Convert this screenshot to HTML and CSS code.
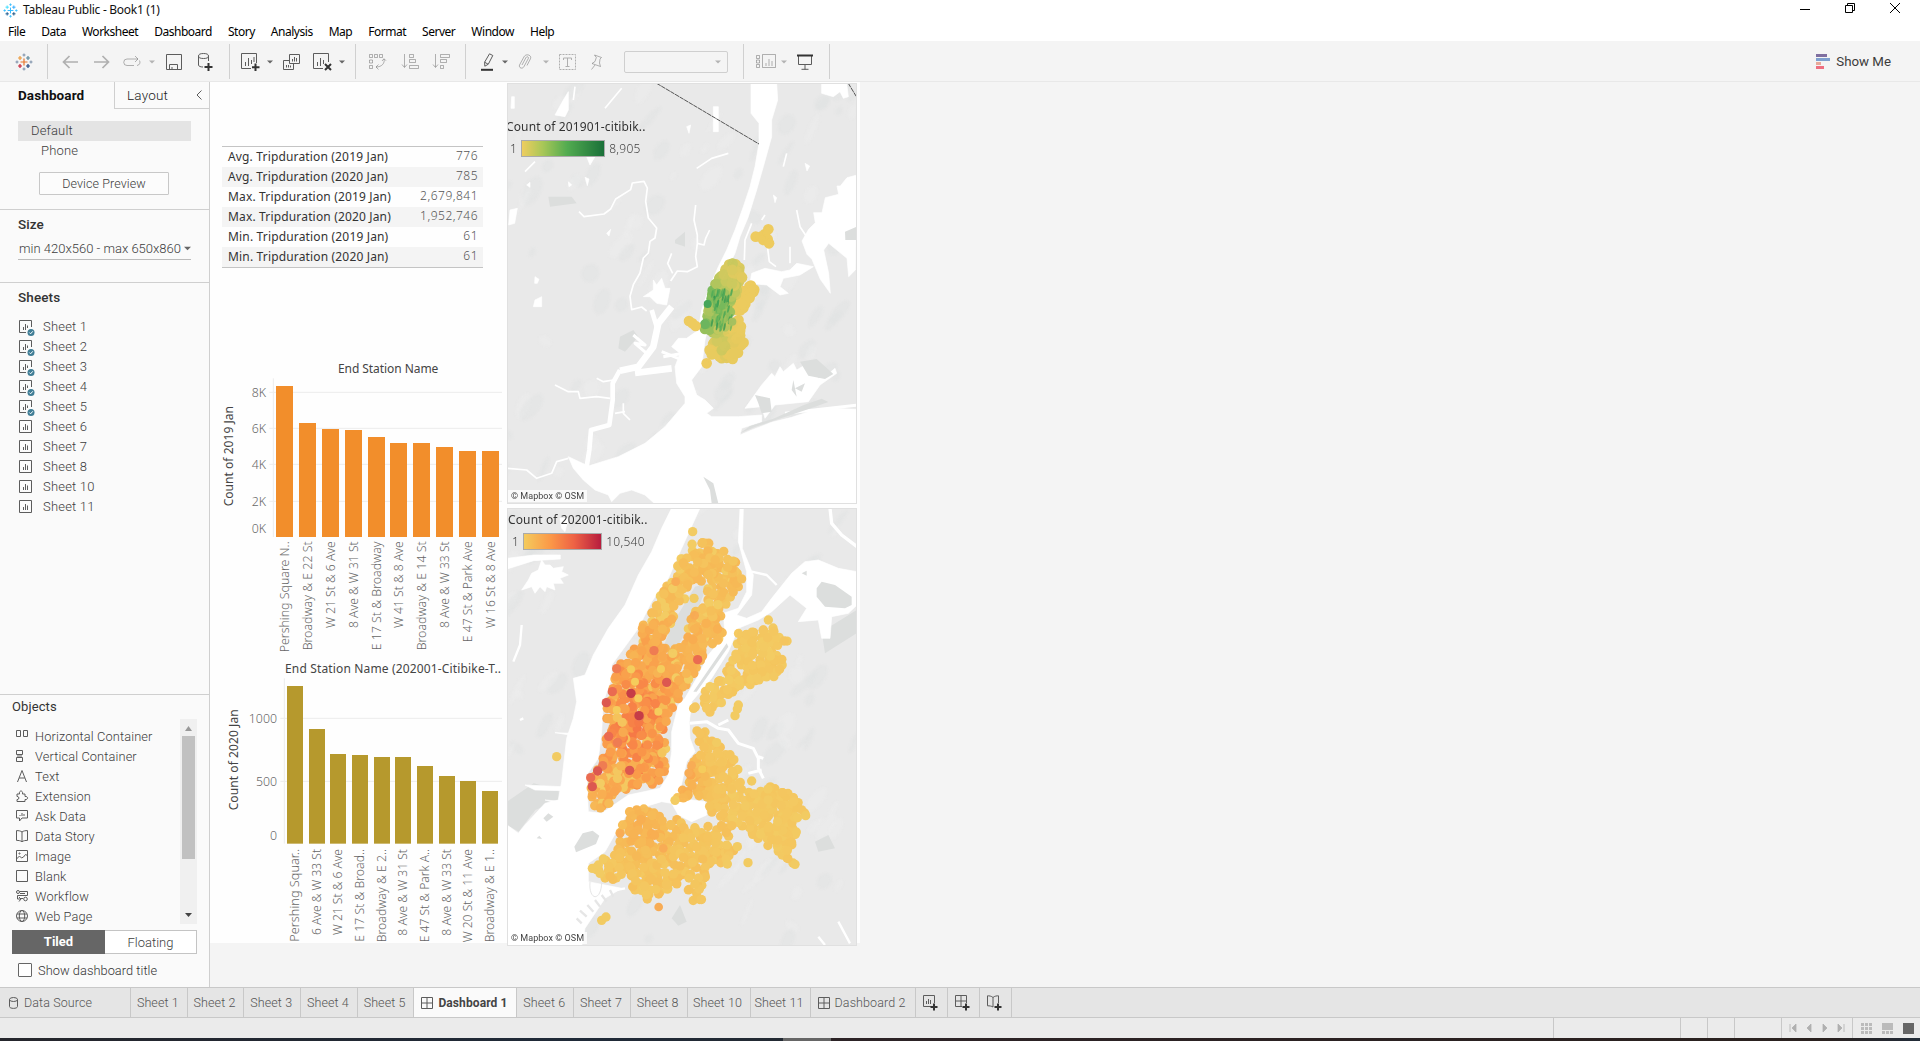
FILE: index.html
```html
<!DOCTYPE html>
<html lang="en">
<head>
<meta charset="utf-8">
<title>Tableau Public - Book1 (1)</title>
<link rel="stylesheet" href="styles.css">
</head>
<body>
<svg class="defs" width="0" height="0" aria-hidden="true">
  <symbol id="logo" viewBox="0 0 18 18">
    <path class="l-or" d="M9 5.5v7M5.5 9h7"/>
    <path class="l-a" d="M5 3v4M3 5h4"/><path class="l-b" d="M13 3v4M11 5h4"/>
    <path class="l-c" d="M5 11v4M3 13h4"/><path class="l-d" d="M13 11v4M11 13h4"/>
    <path class="l-e" d="M9 .5v3M7.5 2h3M9 14.500v3M7.500 16h3M2 7.500v3M.5 9h3M16 7.500v3M14.500 9h3"/>
  </symbol>
  <symbol id="sheet" viewBox="0 0 16 16"><path d="M1.500 1.500h12v12h-12zM5.500 8v3M7.500 5v6M9.500 6.500v4.500"/></symbol>
  <symbol id="sheet-used" viewBox="0 0 18 18"><path d="M13.500 8V1.500h-12v12H8M5.500 8v3M7.500 5v6M9.500 6.500V9"/><circle class="badge" cx="13" cy="13.500" r="3.500"/><path class="tick" d="M11.300 13.500l1.300 1.300 2.200-2.500"/></symbol>
  <symbol id="caret" viewBox="0 0 6 4"><path class="solid" d="M0 .5h6L3 3.500z"/></symbol>
  <symbol id="dash" viewBox="0 0 12 12"><path d="M.5.5h11v11H.5zM6 .5v11M.5 6h11"/></symbol>
</svg>

<header class="titlebar">
  <svg class="app-icon" width="15" height="15"><use href="#logo"/></svg>
  <span class="app-title">Tableau Public - Book1 (1)</span>
  <div class="win-controls">
    <svg width="12" height="12"><path d="M1 7.500h10"/></svg>
    <svg width="12" height="12"><path d="M1.500 3.500h7v7h-7zM3.500 3.500v-2h7v7h-2"/></svg>
    <svg width="12" height="12"><path d="M1 1l10 10M11 1L1 11"/></svg>
  </div>
</header>
<nav class="menu">
  <span>File</span><span>Data</span><span>Worksheet</span><span>Dashboard</span><span>Story</span><span>Analysis</span><span>Map</span><span>Format</span><span>Server</span><span>Window</span><span>Help</span>
</nav>

<div class="toolbar">
  <div class="group g-logo"><svg width="18" height="18"><use href="#logo"/></svg></div>
  <div class="group g-nav">
    <svg class="off thick" width="16" height="14"><path d="M16 7H1.500M7.500 1L1.500 7l6 6"/></svg>
    <svg class="off thick" width="16" height="14"><path d="M0 7h14.500M8.500 1l6 6-6 6"/></svg>
    <svg class="off" width="18" height="12"><path d="M11 9.500H4a3.200 3.200 0 0 1 0-6.500h11M12 0l3 3-3 3M14 9.500a3.300 3.300 0 0 0 2.500-5"/></svg>
    <svg class="off" width="6" height="4"><use href="#caret"/></svg>
    <svg width="16" height="16"><path d="M.5.5h15v15H.5zM3.500 15.500v-5h8v5M6 15.500v-2.500"/></svg>
    <svg width="16" height="18"><ellipse cx="5.500" cy="3" rx="5" ry="2.500"/><path d="M.5 3v9c0 1.300 2 2 4.500 2M10.500 3v5"/><path class="bold" d="M10.500 10v8M6.500 14h8"/></svg>
  </div>
  <div class="group g-sheets">
    <svg width="18" height="18"><path d="M10 15.500H.5V.5h15V10M4.500 9v4M7.500 5v8M10.500 7v4M13 4v5"/><path class="bold" d="M14.500 10.500v7.500M11 14.300h7.500"/></svg>
    <svg width="6" height="4"><use href="#caret"/></svg>
    <svg width="18" height="16"><path d="M6.500.5h10v9h-10zM9.500 5v2.500M11.500 3v4.500M13.500 4v3.500M6.500 6.500h-6v9h10v-6M3.500 11v2.500M5.500 11v2.500M7.500 11.500v2"/></svg>
    <svg width="18" height="18"><path d="M10 15.500H.5V.5h15V9M4.500 9v4M7.500 5v8M10.500 7v4"/><path class="bold" d="M12 11l6 6M18 11l-6 6"/></svg>
    <svg width="6" height="4"><use href="#caret"/></svg>
  </div>
  <div class="group g-sort">
    <svg class="off" width="17" height="17"><path d="M.5 1.500h3v3h-3zM5.500 1.500h3v3h-3zM10.500 1.500h3v3h-3zM.5 7h3v3h-3zM.5 12.500h3v3h-3zM15 6c1 4-2 8-8 8M9.500 11.500L7 14l2.500 2.500M13 8l2-2.300 2 2"/></svg>
    <svg class="off" width="18" height="17"><path d="M3.500 1v13M1 11.500l2.500 3 2.500-3M8.500 1.500h4v3h-4zM8.500 6.500h6v3h-6zM8.500 12.500h9v3h-9z"/></svg>
    <svg class="off" width="18" height="17"><path d="M3.500 1v13M1 11.500l2.500 3 2.500-3M8.500 1.500h9v3h-9zM8.500 6.500h6v3h-6zM8.500 12.500h3v3h-3z"/></svg>
  </div>
  <div class="group g-mark">
    <svg width="14" height="18"><path d="M8.500.8l3.300 1.700-4.500 8.700-3.500 2-.2-4zM3.600 9.200l3.500 2"/><path class="bold" d="M0 16.800h12"/></svg>
    <svg width="6" height="4"><use href="#caret"/></svg>
    <svg class="off" width="14" height="16"><path d="M4 11l4-7.500c1-1.500 3-.5 2.300 1L6 12.500c-1.500 3-5.500 1.500-4.500-1.500L6 2.800C8-.8 14 1 12.500 4.700L9 11.500"/></svg>
    <svg class="off" width="6" height="4"><use href="#caret"/></svg>
    <svg class="off" width="17" height="16"><path stroke-dasharray="2 1" d="M.5.500h16v15H.5z"/><path d="M4.500 6V4h8v2M8.500 4v9M6.500 12.500h4"/></svg>
    <svg class="off" width="14" height="16"><path d="M5.500 1l7 2.500-1.500 1.500-.5 4 1 3.500-8.500-3 3-2 1.300-4zM6 11l-3.500 4.500"/></svg>
    <span></span>
    <div class="combo"><svg class="off" width="6" height="4"><use href="#caret"/></svg></div>
  </div>
  <div class="group g-fit">
    <svg class="off" width="20" height="15"><path d="M.5 1.500h3v3h-3zM.5 6h3v3h-3zM.5 10.500h3v3h-3zM6.500.5h13v13h-13zM10 9v3M13 5v7M16 7v5"/></svg>
    <svg class="off" width="6" height="4"><use href="#caret"/></svg>
    <svg width="18" height="16"><path d="M2.500 2v8.500h13V2M9 10.500v5M5.500 15.300h7"/><path class="bold" d="M1 1.500h16"/></svg>
  </div>
  <div class="show-me"><svg width="14" height="15"><path fill="#7f6fa0" d="M0 0h11v3H0z"/><path fill="#7ea0cf" d="M0 4h14v3H0z"/><path fill="#e8a99a" d="M0 8h5v3H0z"/><path fill="#ee6f80" d="M0 12h8v3H0z"/></svg><span>Show Me</span></div>
</div>

<main class="work">
  <aside class="side">
    <div class="side-tabs"><b>Dashboard</b><div class="tab-off"><span>Layout</span><svg width="6" height="10"><path d="M5.500.5L1 5l4.500 4.500"/></svg></div></div>
    <section class="devices">
      <div class="dev on">Default</div><div class="dev sub">Phone</div>
      <div class="preview">Device Preview</div>
    </section>
    <section class="size"><h2>Size</h2><div class="select"><span>min 420x560 - max 650x860</span><svg width="7" height="5"><use href="#caret"/></svg></div></section>
    <section class="sheets"><h2>Sheets</h2>
      <ul>
        <li><svg><use href="#sheet-used" width="18" height="18"/></svg>Sheet 1</li>
        <li><svg><use href="#sheet-used" width="18" height="18"/></svg>Sheet 2</li>
        <li><svg><use href="#sheet-used" width="18" height="18"/></svg>Sheet 3</li>
        <li><svg><use href="#sheet-used" width="18" height="18"/></svg>Sheet 4</li>
        <li><svg><use href="#sheet-used" width="18" height="18"/></svg>Sheet 5</li>
        <li><svg><use href="#sheet" width="16" height="16"/></svg>Sheet 6</li>
        <li><svg><use href="#sheet" width="16" height="16"/></svg>Sheet 7</li>
        <li><svg><use href="#sheet" width="16" height="16"/></svg>Sheet 8</li>
        <li><svg><use href="#sheet" width="16" height="16"/></svg>Sheet 10</li>
        <li><svg><use href="#sheet" width="16" height="16"/></svg>Sheet 11</li>
      </ul>
    </section>
    <section class="objects"><h3>Objects</h3>
      <div class="obj-box">
        <ul>
          <li><svg viewBox="0 0 12 12"><path d="M.5.5h4v6h-4zM7.500.5h4v6h-4z"/></svg>Horizontal Container</li>
          <li><svg viewBox="0 0 12 12"><path d="M.5.500h6v4h-6zM.5 7.500h6v4h-6z"/><path class="solid" opacity=".5" d="M1 5h5v2H1z"/></svg>Vertical Container</li>
          <li><svg viewBox="0 0 12 12"><path d="M1.500 12L6 .5l4.500 11.500M3.200 8h5.600"/></svg>Text</li>
          <li><svg viewBox="0 0 12 12"><path d="M1 4h2.500c-1-4 4-4 3 0H9v2.500c3.500-.5 3.500 3.500 0 3V11.500H1V9.500c2.500.5 2.500-3.500 0-3z"/></svg>Extension</li>
          <li><svg viewBox="0 0 12 12"><path d="M.5.500h11v7.500H6L3.500 11V8h-3zM4 5v1M6 3v3M8 4v2"/></svg>Ask Data</li>
          <li><svg viewBox="0 0 12 12"><path d="M6 2C4.500.8 2.500.6.5.6v9.800c2 0 4 .2 5.500 1.300 1.500-1.100 3.500-1.300 5.500-1.300V.6C9.500.6 7.500.8 6 2v9.500"/></svg>Data Story</li>
          <li><svg viewBox="0 0 12 12"><path d="M.5.500h11v11H.5zM.5 9l3-3 2 2 2-1 2-2.500 2 1"/><circle cx="3.500" cy="3.500" r=".6"/></svg>Image</li>
          <li><svg viewBox="0 0 12 12"><path d="M.5.500h11v11H.5z"/></svg>Blank</li>
          <li><svg viewBox="0 0 12 12"><circle cx="2" cy="2" r="1.500"/><circle cx="9.500" cy="9" r="1.800"/><path d="M4 1.500h7.500v4H1.500v3.500h3M4 3.500h5M3 7l2 2-2 2.500M5 8.500h2"/></svg>Workflow</li>
          <li><svg viewBox="0 0 12 12"><circle cx="6" cy="6" r="5.500"/><ellipse cx="6" cy="6" rx="2.700" ry="5.500"/><path d="M1 4h10M1 8h10"/></svg>Web Page</li>
        </ul>
        <div class="scroll"><svg width="8" height="5"><path fill="#999" d="M0 5h7L3.500 0z"/></svg><i></i><svg width="8" height="5"><path fill="#444" d="M0 0h7L3.500 4z"/></svg></div>
      </div>
      <div class="toggle"><b>Tiled</b><span>Floating</span></div>
      <div class="check"><i></i>Show dashboard title</div>
    </section>
  </aside>

  <div class="dashboard">
    <div class="left-col">
      <table>
        <tr><th>Avg. Tripduration (2019 Jan)</th><td>776</td></tr>
        <tr><th>Avg. Tripduration (2020 Jan)</th><td>785</td></tr>
        <tr><th>Max. Tripduration (2019 Jan)</th><td>2,679,841</td></tr>
        <tr><th>Max. Tripduration (2020 Jan)</th><td>1,952,746</td></tr>
        <tr><th>Min. Tripduration (2019 Jan)</th><td>61</td></tr>
        <tr><th>Min. Tripduration (2020 Jan)</th><td>61</td></tr>
      </table>
      <svg id="chart2019" class="chart" viewBox="0 0 891 909" width="297" height="303"></svg>
      <svg id="chart2020" class="chart" viewBox="0 9 891 870" width="297" height="290"></svg>
    </div>
    <div class="map-col">
      <div class="map">
        <svg viewBox="6 9 1050 1263" width="350" height="421">
          <g id="relief1" class="relief"></g>
          <g class="park"><path d="M510 480l30-25v45l-30-10zM345 770l40-20 15 20-40 45-20-10zM130 350l70 0 15 20-80 10z"/></g>
          <g class="water">
            <path d="M738 9L738 100 762 130 762 190 750 260 735 320 715 380 690 450 665 510 640 560 610 630 590 690 580 750 545 775 520 775 500 800 525 820 510 860 515 910 540 950 540 970 480 1040 420 1090 340 1130 250 1158 190 1130 205 1165 235 1200 270 1230 310 1245 320 1265 345 1240 380 1230 420 1245 450 1272 1056 1272 1056 988 980 985 920 992 860 1012 800 1027 740 1050 705 1065 710 1045 770 1025 770 1005 700 1010 620 1010 605 1000 625 985 600 960 575 945 560 900 590 860 600 780 640 620 690 520 705 470 730 410 755 330 775 260 800 170 800 120 818 60 815 9z"/>
            <path d="M1056 285l-30 8-20 25-10 0 5 25-40 10-10 45-25 0 5 30-20 20-20 35 15 40 15 15 25 60 30 42-5-60-15-70 15-20 55 45 5 55 20-20zM740 580l40-15 50 10 25-5 20-20 50 10-40 25-50 10-10 25 25 20-25 5-40-30-50-5zM770 915l30-35 10 10 15-30 10 15 30-25 10 20 25-15 40 40 20-5 30-25 5 15-50 35-35 50-100 10-30 40-10-35-50 5zM445 600l10 15 15-20 10 30 15 0-10 50-30-5-20-20-20 0 30-20zM175 60l15-25 0 55-10 20-30-5zM625 80h15v75h-15zM15 390l22-5-8 45-18 5zM20 50h8v35h-10zM90 660l20-10 0 30-25 0zM245 230l25 0-15 25zM985 50l-35-10 0-30 75 0 5 40-15 5-10-20z"/><path d="M90 590l12 8-5 12-8 0zM65 315l10-8 0 15zM240 292l12 5-5 20zM545 140l12-5-5 25zM305 460l12-12-5 20zM190 305l10 10-8 5zM805 345l10 8-5 15zM900 250l14 8-8 15z"/>
          </g>
          <g class="river">
            <path d="M222 395l15 15 60-8 20-15 15-30 45-28 5-20 35-5 10 20-5 40 8 50 25 30-5 30-15 10-5 35-15 15-10 45-20 35-10 35 5 40 30-8 15 12"/>
            <path d="M572 375l-5 45 10 45 0 25 20 5 5-20 12-25M577 490l-5 40 5 30-30 15-30-2-20 30M500 520l-12 30 15 30M5 1165l60 5 30 25 45-15 15-35 35-10"/>
            <path d="M150 915l40 20 30 0 5 20 50-5 40 5M275 895l20 10 30-5M355 970l0 30 20 20M330 1000l30-5M575 265l45-30 50-15M740 430l-20 50-2 60M770 420l10-15M788 505l5 40 20 15M855 500l0 50M875 390l10 50 20 30M300 85l50-60M60 275l30-30M835 260l10-40M205 60l5-40"/>
            <path stroke-width="9" d="M470 815l50 20M385 765l35 30-30-5 35 30M475 830l60-10M840 1000l220-25"/>
            <path stroke-width="20" d="M500 680l-40 50-15 70-45 60-55 12M500 865l-110 14"/>
            <path stroke-width="14" d="M345 870l-22 40 0 50-10 75-55 15-5 60-8 50M440 690l15 50"/>
          </g>
          <g class="park"><path d="M885 845l50-8 50 45-25 15-50-10zM705 1060l30-22 70-22 90-40 55-20 20 10-70 25-90 30-60 20zM750 945l45 10 5 40-30 5-10-30zM1020 455l36-15v40l-35 0zM595 1190l30 20 15 60h-20l-5-40zM865 900l10 50-15-20zM870 925l30-15-10 25z"/></g>
          <path class="border-line" d="M455 10L762 192M1030 10l26 43"/>
          <g id="dots1" opacity=".96"></g>
        </svg>
        <div class="legend l1"><p>Count of 201901-citibik..</p><div><span>1</span><i></i><span>8,905</span></div></div>
        <small>© Mapbox © OSM</small>
      </div>
      <div class="map">
        <svg viewBox="6 9 1050 1314" width="350" height="438">
          <g id="relief2" class="relief"></g>
          <g class="park"><path d="M6 890l80-55 75 20 0 30-70 30-50 65-35-20zM950 380l105-65v70l-95 60zM930 1010l40-20 20 40-50 10z"/></g>
          <g class="water">
            <path d="M500 9L470 70 440 140 400 210 360 300 310 370 265 450 240 510 205 520 215 590 205 640 185 700 178 760 170 830 160 885 120 895 60 960 40 985 6 960 6 1323 230 1323 240 1270 300 1180 350 1150 250 1130 250 1075 300 1040 340 970 370 920 470 890 500 895 520 930 560 950 605 930 600 890 520 880 545 770 570 740 555 700 553 650 560 590 620 520 670 440 700 370 760 345 800 320 855 270 905 310 880 350 940 345 950 400 975 400 980 335 1030 325 1056 300 1056 200 1000 190 940 165 900 170 860 205 800 280 770 320 725 340 695 330 740 270 745 210 712 130 715 9 705 9 700 110 725 200 725 260 700 310 655 325 660 390 610 450 580 510 540 580 520 600 500 680 500 740 490 810 465 850 370 870 290 925 250 920 245 810 280 760 290 680 295 590 320 520 320 480 400 370 440 290 490 220 530 130 585 9z"/>
            <path d="M110 165l10 15 15 0 10 10 30-5-5 15 20 10-25 10 10 15-30 0 5 20-25-10-5 15-15-15-15 20-10-20-30 10 20-30 10-20 20-10zM6 160l80-10 80 0 0 12-80 5-80 25zM60 840l110 5 0 12-80-2zM120 885l60 5v12zM165 40h25l-10 40-10-10zM150 683l50 2v6z"/>
          </g>
          <g class="river">
            <path stroke-width="10" d="M975 10l5 45 30 35 46 35"/><path stroke-width="9" d="M555 655l50-5 35 20 30 5 30 40 45 15 15 30 0 30 15 30M640 660l30-15M760 755l15 5M730 805l40-10"/>
            <path stroke-width="7" d="M740 200l45 10 30 30M50 360l-5 60-20 50M1000 1250l35 65M940 1295l20 25M45 645l10-5M310 1160l50-10"/>
          </g>
          <g class="park"><path d="M208 1025l25-40 30-8 20 15-10 25-60 25zM665 415l5 10-95 135-10 0zM935 250l15-20 40 10 50 35 0 25-20 10-60-5-25-30zM570 245l40-10-45 110-60 100-35-5 30-80zM500 1240l25-40 20 50-25 12zM890 205l15-8 0 15zM115 940l15-15 15 10-20 15zM95 1000l8-8 8 10z"/></g>
          <path class="piers" d="M245 1235l-20-18M265 1220l-18-20M285 1205l-15-20M305 1190l-15-20M325 1175l-10-20M230 1255l-15-15"/>
          <path class="piers thin" d="M255 1130c-5 60 35 60 35 0"/>
          <g id="dots2" opacity=".95"></g>
        </svg>
        <div class="legend l2"><p>Count of 202001-citibik..</p><div><span>1</span><i></i><span>10,540</span></div></div>
        <small>© Mapbox © OSM</small>
      </div>
    </div>
  </div>
</main>

<footer class="tabs">
  <div class="t src"><svg width="9" height="12"><ellipse cx="4.500" cy="2.500" rx="4" ry="2"/><path d="M.5 2.500v7c0 2.500 8 2.500 8 0v-7"/></svg>Data Source</div>
  <div class="t s1">Sheet 1</div><div class="t s1">Sheet 2</div><div class="t s1">Sheet 3</div><div class="t s1">Sheet 4</div><div class="t s1">Sheet 5</div>
  <div class="t cur"><svg width="12" height="12"><use href="#dash"/></svg>Dashboard 1</div>
  <div class="t s1">Sheet 6</div><div class="t s1">Sheet 7</div><div class="t s1">Sheet 8</div><div class="t s2">Sheet 10</div><div class="t s3">Sheet 11</div>
  <div class="t d2"><svg width="12" height="12"><use href="#dash"/></svg>Dashboard 2</div>
  <div class="t add"><svg width="16" height="16"><path d="M9 11.500H1.500v-11h11V8M4.500 6v3M6.500 4v5M8.500 5v4"/><path class="bold" d="M12 8.500v7M8.500 12h7"/></svg></div>
  <div class="t add"><svg width="16" height="16"><path d="M8 11.500H1.500v-11h11V8M7 .500v11M1.500 6h11"/><path class="bold" d="M12 8.500v7M8.500 12h7"/></svg></div>
  <div class="t add"><svg width="16" height="16"><path d="M7 2.500C5.500 1 3 .8 1.500.8v10c2 0 4 .2 5.500 1.200V2.500C8.500 1 11 .8 12.500.8V8"/><path class="bold" d="M12 8.500v7M8.500 12h7"/></svg></div>
</footer>
<div class="status">
  <div class="c1"></div><div class="c2"></div><div class="c2"></div><div class="c3"></div>
  <div class="pager">
    <svg width="8" height="8"><path d="M1 0v8M7 0v8L3 4z"/></svg><svg width="8" height="8"><path d="M6 0v8L2 4z"/></svg><svg width="8" height="8"><path d="M2 0v8l4-4z"/></svg><svg width="8" height="8"><path d="M7 0v8M1 0v8l4-4z"/></svg>
  </div>
  <div class="views">
    <svg width="11" height="11"><path d="M0 0h3v3H0zM4 0h3v3H4zM8 0h3v3H8zM0 4h3v3H0zM4 4h3v3H4zM8 4h3v3H8zM0 8h3v3H0zM4 8h3v3H4zM8 8h3v3H8z"/></svg>
    <svg width="11" height="11"><path d="M0 0h11v7H0zM0 8h3v3H0zM4 8h3v3H4zM8 8h3v3H8z"/></svg>
    <svg class="dark" width="11" height="11"><path d="M0 0h11v11H0z"/></svg>
  </div>
</div>
<div class="taskbar"></div>
<script src="charts.js"></script>
</body>
</html>
```
FILE: styles.css
```css
* { box-sizing: border-box; }
body { margin: 0; height: 1041px; display: flex; flex-direction: column; overflow: hidden; background: #f4f4f4; color: #3c3c3c; font-family: Roboto, "Liberation Sans", sans-serif; font-size: 13px; font-weight: 300; }
ul, h2, h3, p { margin: 0; padding: 0; list-style: none; }
svg { display: block; overflow: visible; flex: none; fill: none; stroke: #5c5c5c; stroke-width: 1; }
.defs { position: absolute; }
.solid { fill: #666; stroke: none; }
.off { opacity: .45; }
.thick { stroke-width: 1.700; }
.bold { stroke: #333; stroke-width: 2; }
.l-or { stroke: #e8762c; stroke-width: 1.200; }
.l-a { stroke: #eb9a3c; stroke-width: 1.200; }
.l-b { stroke: #5b879b; stroke-width: 1.200; }
.l-c { stroke: #c72037; stroke-width: 1.200; }
.l-d { stroke: #1f447e; stroke-width: 1.200; }
.l-e { stroke: #7b8fa8; stroke-width: 1; }
.app-icon { --mono: #3f7fa8; }

.titlebar { height: 20px; background: #fff; display: flex; align-items: center; padding-left: 3px; color: #111; font: 400 12px "Noto Sans", sans-serif; flex: none; }
.app-icon { filter: grayscale(1) sepia(1) hue-rotate(165deg) saturate(4); margin-right: 5px; }
.app-title { letter-spacing: -.28px; margin-top: -1px; }
.win-controls { margin-left: auto; display: flex; gap: 33px; padding-right: 19px; margin-top: -4px; }
.win-controls svg { stroke: #000; }
.menu { height: 21px; background: #fff; display: flex; gap: 16px; padding-left: 8px; font: 400 12px/23px "Noto Sans", sans-serif; color: #000; letter-spacing: -.48px; flex: none; }

.toolbar { height: 41px; display: flex; align-items: center; border-bottom: 1px solid #e8e8e8; flex: none; }
.group { height: 35px; display: grid; align-items: center; justify-items: center; border-right: 1px solid #d0d0d0; padding-top: 1px; }
.g-logo { width: 48px; }
.g-nav { width: 182px; padding-left: 6px; grid-template-columns: 31px 34px 26px 14px 30px 34px; }
.g-sheets { width: 126px; padding-left: 5px; grid-template-columns: 30px 10px 34px 26px 14px; }
.g-sort { width: 110px; padding-left: 5px; grid-template-columns: 33px 31px 32px; }
.g-mark { width: 278px; padding-left: 9px; grid-template-columns: 26px 7px 33px 9px 35px 22px 17px 104px; }
.g-fit { width: 86px; padding-left: 7px; grid-template-columns: 30px 5px 38px; }
.combo { width: 104px; height: 22px; border: 1px solid #cfcfcf; border-radius: 2px; display: flex; justify-content: flex-end; align-items: center; padding-right: 6px; }
.show-me { margin-left: auto; display: flex; align-items: center; gap: 6px; padding-right: 29px; font-size: 13.300px; font-weight: 400; }
.show-me svg { stroke: none; }

.work { height: 906px; flex: none; display: flex; }
.side { width: 210px; background: #fafafa; border-right: 1px solid #cfcfcf; display: flex; flex-direction: column; flex: none; }
.side-tabs { height: 27px; display: flex; flex: none; color: #111; font-size: 13.500px; line-height: 27px; }
.side-tabs b { width: 114px; padding-left: 18px; font-weight: 700; letter-spacing: .1px; }
.tab-off { flex: 1; border-left: 1px solid #cfcfcf; border-bottom: 1px solid #cfcfcf; display: flex; align-items: center; justify-content: space-between; padding: 0 7px 0 12px; color: #222; letter-spacing: .2px; }
.devices { height: 101px; border-bottom: 1px solid #cfcfcf; padding: 12px 18px 0; flex: none; }
.dev { height: 20px; line-height: 20px; padding-left: 13px; width: 173px; letter-spacing: .15px; }
.on { background: #e4e4e4; }
.sub { padding-left: 23px; }
.preview { width: 130px; height: 23px; margin: 11px 0 0 21px; border: 1px solid #c8c8c8; border-radius: 1px; text-align: center; line-height: 21px; font-size: 12.500px; background: #fcfcfc; letter-spacing: .1px; }
h2, h3 { font-size: 13.500px; font-weight: 500; color: #333; line-height: 20px; letter-spacing: .1px; }
h3 { font-size: 13px; font-weight: 400; }
.size { height: 73px; border-bottom: 1px solid #cfcfcf; padding: 4px 18px 0; flex: none; }
.select { width: 173px; height: 23px; margin-top: 3px; border-bottom: 1px solid #bbb; display: flex; align-items: center; justify-content: space-between; padding-left: 1px; white-space: nowrap; }
.sheets { padding: 5px 18px 0; flex: 1; }
.sheets h2 { margin-top: -1px; }
.sheets ul { margin-top: 9px; }
li { display: flex; align-items: center; height: 20px; letter-spacing: .12px; }
.sheets li { letter-spacing: .2px; }
.sheets li svg { width: 18px; height: 18px; margin: 3px 7px 0 0; }
.badge { fill: #3f7d95; stroke: none; }
.tick { stroke: #fff; }
.objects { height: 294px; border-top: 1px solid #cfcfcf; padding: 2px 12px 0; flex: none; }
.obj-box { display: flex; justify-content: space-between; height: 205px; margin-top: 2px; }
.obj-box ul { padding: 7px 0 0 4px; }
.obj-box li { font-size: 12.800px; }
.obj-box li svg { width: 12px; height: 12px; margin-right: 7px; }
.scroll { width: 17px; background: #f0f0f0; display: flex; flex-direction: column; align-items: center; padding: 7px 0 6px; }
.scroll svg { stroke: none; }
.scroll i { width: 13px; height: 123px; margin: 5px 0 auto; background: #c1c1c1; }
.toggle { height: 24px; margin-top: 6px; display: flex; width: 185px; border: 1px solid #c4c4c4; line-height: 23px; text-align: center; background: #fff; }
.toggle b { width: 93px; background: #666; color: #fff; margin: -1px 0 -1px -1px; font-weight: 700; }
.toggle span { flex: 1; }
.check { display: flex; align-items: center; margin: 9px 0 0 6px; height: 14px; font-size: 12.800px; color: #333; letter-spacing: .05px; }
.check i { width: 14px; height: 14px; border: 1px solid #666; border-radius: 1px; margin-right: 6px; background: #fff; }

.dashboard { width: 650px; height: 861px; background: #fefefe; display: flex; flex: none; font-family: "Noto Sans", sans-serif; color: #4a4a4a; }
.left-col { width: 297px; flex: none; }
table { width: 261px; height: 121px; margin: 64px 0 82px 12px; border-top: 1px solid #c4c4c4; border-bottom: 1px solid #c4c4c4; border-collapse: separate; border-spacing: 0; font-size: 12px; table-layout: fixed; }
tr { height: 20px; }
tr:nth-child(even) { background: #f4f4f4; }
th, td { height: 19.830px; line-height: 16px; }
th { font-weight: 400; text-align: left; padding: 0 0 0 6px; width: 176px; white-space: nowrap; color: #333; letter-spacing: .16px; }
td { text-align: right; padding: 0 5px 2px 0; color: #555; font-weight: 300; letter-spacing: .5px; }
.chart { stroke: none; font-size: 37px; font-weight: 300; fill: #666; }
.chart .head { fill: #444; font-size: 36px; font-weight: 400; }
.chart .rule { fill: none; stroke: #ececec; stroke-width: 3; }
.map-col { width: 350px; padding-top: 1px; flex: none; }
.map { position: relative; background: #e9e9e9; border: 1px solid #e0e0e0; margin-bottom: 4px; overflow: hidden; width: 350px; }
.map > svg { stroke: none; margin: -1px; overflow: hidden; }
.relief { filter: blur(3px); }
.water { fill: #fff; stroke: #fff; stroke-width: 2; stroke-linejoin: round; }
.river { fill: none; stroke: #fff; stroke-width: 5; stroke-linejoin: round; }
.park { fill: #dcdedd; }
.piers { fill: none; stroke: #e6e6e6; stroke-width: 7; }
.thin { stroke-width: 3; }
.border-line { stroke: #555; stroke-width: 3; stroke-dasharray: 14 2; }
.legend { position: absolute; left: 0; font-size: 12px; font-weight: 400; color: #333; white-space: nowrap; line-height: 16px; }
.legend p { letter-spacing: .13px; }
.legend div { display: flex; align-items: center; height: 17px; margin-top: 5px; gap: 4px; color: #444; font-weight: 300; letter-spacing: .3px; }
.legend i { height: 17px; border: 1px solid #aaa; }
.l1 { top: 35px; margin-left: -2px; }
.l1 div { padding-left: 4px; }
.l1 i { width: 84px; background: linear-gradient(90deg, #efcd5f, #a9c758 25%, #52ab50 55%, #1a7039); }
.l2 { top: 3px; }
.l2 div { padding-left: 4px; }
.l2 i { width: 79px; background: linear-gradient(90deg, #f4cb5d, #fb9747 35%, #ee6245 65%, #b71d3e); }
small { position: absolute; left: 0; bottom: 1px; padding: 0 3px; background: rgba(255,255,255,.75); font: 400 9px/12px Roboto, sans-serif; color: #444; letter-spacing: .03px; }

.tabs { height: 31px; flex: none; display: flex; background: #e5e5e5; border-top: 1px solid #c8c8c8; border-bottom: 1px solid #c8c8c8; color: #555; font-size: 12.500px; margin-top: -1px; }
.t { border-right: 1px solid #c8c8c8; display: flex; align-items: center; justify-content: center; gap: 5px; white-space: nowrap; padding-right: 2px; letter-spacing: .1px; }
.src { width: 131px; justify-content: flex-start; padding-left: 9px; gap: 6px; }
.s1 { width: 56.700px; }
.cur { width: 103px; background: #fafafa; color: #444; font-weight: 700; font-size: 12px; }
.s2 { width: 63px; }
.s3 { width: 60px; }
.d2 { width: 105px; }
.add { width: 32px; }
.status { height: 20px; flex: none; display: flex; justify-content: flex-end; background: #ebebeb; }
.status > div { border-left: 1px solid #c8c8c8; }
.c1 { width: 127px; }
.c2 { width: 27px; }
.c3 { width: 47px; }
.pager { width: 71px; display: flex; align-items: center; gap: 8px; padding-left: 7px; }
.pager svg { fill: #b0b0b0; stroke: #b0b0b0; stroke-width: .8; }
.views { width: 68px; display: flex; align-items: center; gap: 10px; padding-left: 8px; }
.views svg { fill: #bbb; stroke: none; }
.views .dark { fill: #666; }
.taskbar { height: 3px; flex: none; background: linear-gradient(90deg, #25262c, #1f2a38 30%, #232a33 40.800%, #666 40.800%, #666 43.300%, #2c2326 43.300%, #2a211f 95%, #222c38); }
```
FILE: charts.js
```js
const NS = 'http://www.w3.org/2000/svg';
function add(parent, tag, attrs, text) {
  const el = document.createElementNS(NS, tag);
  for (const k in attrs) el.setAttribute(k, attrs[k]);
  if (text) el.textContent = text;
  parent.appendChild(el);
  return el;
}

// Bars are [label, x, top, label bottom]; lengths are in thirds of a pixel.
function chart(id, o) {
  const s = document.getElementById(id);
  add(s, 'text', { class: 'head', x: o.title[1], y: o.title[2], textLength: o.title[3] }, o.title[0]);
  add(s, 'text', { class: 'head', transform: `translate(${o.axis[1]} ${o.axis[2]}) rotate(-90)`, textLength: o.axis[3] }, o.axis[0]);
  add(s, 'path', { class: 'rule', d: `M${o.left} 85V${o.base}` });
  o.ticks.forEach(([label, y, line]) => {
    add(s, 'text', { x: o.tickX, y: y + 13, 'text-anchor': 'end' }, label);
    if (line) add(s, 'path', { class: 'rule', d: `M${o.left - 12} ${line}H876` });
  });
  o.bars.forEach(([label, x, top, end]) => {
    add(s, 'rect', { x, y: top, width: o.w, height: o.base - top, fill: o.color });
    add(s, 'text', { transform: `translate(${x + o.w / 2 + 13} ${end}) rotate(-90)`, textLength: end - o.labelTop, lengthAdjust: 'spacingAndGlyphs' }, label);
  });
}
chart('chart2019', {
  title: ['End Station Name', 384, 68, 301], axis: ['Count of 2019 Jan', 70, 469, 301],
  left: 190, base: 561, tickX: 168, w: 51, color: '#f28e2b', labelTop: 574,
  ticks: [['8K', 128, 127], ['6K', 236, 235], ['4K', 344, 343], ['2K', 455, 454], ['0K', 536, 0]],
  bars: [['Pershing Square N..', 198, 108, 907], ['Broadway & E 22 St', 267, 219, 901], ['W 21 St & 6 Ave', 336, 237, 834],
    ['8 Ave & W 31 St', 405, 240, 834], ['E 17 St & Broadway', 474, 261, 901], ['W 41 St & 8 Ave', 540, 279, 834],
    ['Broadway & E 14 St', 609, 279, 901], ['8 Ave & W 33 St', 678, 291, 834], ['E 47 St & Park Ave', 747, 303, 877], ['W 16 St & 8 Ave', 816, 303, 834]]
});
chart('chart2020', {
  title: ['End Station Name (202001-Citibike-T..', 225, 68, 648], axis: ['Count of 2020 Jan', 83, 481, 303],
  left: 223, base: 581, tickX: 201, w: 48, color: '#b6992d', labelTop: 597,
  ticks: [['1000', 206, 205], ['500', 395, 394], ['0', 557, 0]],
  bars: [['Pershing Squar..', 231, 108, 875], ['6 Ave & W 33 St', 297, 237, 855], ['W 21 St & 6 Ave', 360, 312, 855],
    ['E 17 St & Broad..', 426, 315, 875], ['Broadway & E 2..', 492, 321, 877], ['8 Ave & W 31 St', 555, 321, 857],
    ['E 47 St & Park A..', 621, 348, 877], ['8 Ave & W 33 St', 687, 378, 857], ['W 20 St & 11 Ave', 750, 393, 877], ['Broadway & E 1..', 816, 423, 877]]
});

let seed = 7;
function rnd() { seed = (seed * 16807) % 2147483647; return seed / 2147483647; }
function inside(p, x, y) {
  let c = false;
  for (let i = 0, j = p.length - 2; i < p.length; j = i, i += 2)
    if ((p[i + 1] > y) !== (p[j + 1] > y) && x < (p[j] - p[i]) * (y - p[i + 1]) / (p[j + 1] - p[i + 1]) + p[i]) c = !c;
  return c;
}
function ramp(stops, t) {
  t = Math.max(0, Math.min(.999, t)) * (stops.length - 1);
  const i = Math.floor(t), f = t - i;
  return `rgb(${stops[i].map((v, k) => Math.round(v + (stops[i + 1][k] - v) * f))})`;
}
function scatter(g, poly, hole, step, r, stops, value) {
  const xs = poly.filter((_, i) => i % 2 === 0), ys = poly.filter((_, i) => i % 2);
  const pts = [];
  for (let y = Math.min(...ys); y <= Math.max(...ys); y += step)
    for (let x = Math.min(...xs); x <= Math.max(...xs); x += step) {
      const px = x + (rnd() - .5) * step * 1.3, py = y + (rnd() - .5) * step * 1.3;
      if (inside(poly, px, py) && !(hole && inside(hole, px, py))) pts.push([px, py, rnd()]);
    }
  pts.sort((a, b) => a[2] - b[2]);
  pts.forEach(([x, y]) => add(g, 'circle', { cx: x.toFixed(1), cy: y.toFixed(1), r, fill: ramp(stops, value(x, y)) }));
}
const near = (x, y, cx, cy, sx, sy) => Math.exp(-(((x - cx) / sx) ** 2) - ((y - cy) / sy) ** 2);
function dot(g, x, y, r, fill) { add(g, 'circle', { cx: x, cy: y, r, fill }); }

// Terrain shading
[['relief1', 1270], ['relief2', 1320]].forEach(([id, h]) => {
  const g = document.getElementById(id);
  for (let i = 0; i < 110; i++) {
    const x = rnd() * 1050, y = rnd() * h;
    add(g, 'ellipse', { cx: x, cy: y, rx: 6 + rnd() * 20, ry: 12 + rnd() * 40, fill: rnd() > .5 ? '#dfe0e0' : '#eeeeee', opacity: .4, transform: `rotate(${20 + rnd() * 30} ${x} ${y})` });
  }
});

const green = [[238, 201, 88], [190, 198, 88], [115, 184, 85], [56, 160, 80], [24, 120, 60]];
const g1 = document.getElementById('dots1');
scatter(g1, [600,808,650,765,695,715,708,720,720,805,690,838,650,838,620,825], null, 11, 16, green, (x, y) => .02 + .3 * near(x, y, 655, 770, 25, 50) * rnd());
scatter(g1, [735,612,752,630,735,655,715,690,690,695,680,680,700,640], null, 9, 16, green, () => .01);
scatter(g1, [668,550,700,548,717,575,700,625,680,680,660,740,640,765,600,758,597,740,608,665,635,605], null, 10, 16, green,
  (x, y) => .06 + rnd() * .14 + .34 * near(x, y, 645, 680, 40, 65) + .3 * near(x, y, 598, 745, 25, 30) + .2 * near(x, y, 620, 640, 25, 40));
for (let i = 0; i < 55; i++) {
  const x = 650 + (rnd() - .5) * 60, y = 690 + (rnd() - .5) * 110;
  add(g1, 'ellipse', { cx: x, cy: y, rx: 3, ry: 12, transform: `rotate(12 ${x} ${y})`, fill: ramp(green, .35 + rnd() * .5), opacity: .8 });
}
dot(g1, 608, 672, 12, '#3fa355'); dot(g1, 600, 733, 15, '#67b258'); dot(g1, 682, 725, 12, '#a3be59');
[[552,723],[562,730],[572,738],[605,850],[790,448],[752,470],[768,470],[780,462],[775,480],[788,478],[792,490]].forEach(p => dot(g1, p[0], p[1], 16, '#eec958'));

const heat = [[244, 203, 92], [248, 180, 76], [251, 150, 66], [247, 112, 62], [222, 70, 66], [176, 28, 60]];
const g2 = document.getElementById('dots2');
const manhattan = [570,108,630,115,690,165,722,230,690,280,650,310,652,395,600,450,572,500,530,570,508,600,482,680,488,740,478,800,460,840,400,845,340,870,310,905,275,915,255,880,255,820,290,770,302,690,305,600,330,530,330,490,380,440,405,380,430,330,470,260,505,200,540,140];
const park = [550,235,612,225,600,275,565,320,545,385,500,440,465,420,500,360,525,290,545,285];
scatter(g2, manhattan, park, 15, 14, heat, (x, y) => {
  const mid = near(x, y, 400, 660, 150, 230);
  return .12 + rnd() * .12 + mid * (.28 + (rnd() - .5) * .32) + (y < 340 ? -.06 : 0) - (rnd() < .1 ? .3 : 0);
});
scatter(g2, [700,385,770,372,798,345,825,385,855,415,805,435,840,468,815,515,740,550,700,550,640,610,600,630,558,612,615,540,660,500,690,440], null, 16, 14, heat, () => rnd() * .07);
scatter(g2, [570,675,605,675,625,715,680,745,712,820,712,870,780,840,850,855,880,890,905,930,880,950,870,1010,850,1050,868,1078,800,1030,700,960,620,925,590,880,510,885,540,830,555,780,585,740], null, 15, 14, heat,
  (x, y) => .01 + rnd() * .05 + near(x, y, 555, 820, 45, 60) * .35 * rnd() + (x < 680 ? .04 : 0));
scatter(g2, [385,905,450,910,470,940,510,920,535,965,600,965,680,955,700,985,640,1005,695,1025,660,1075,615,1070,605,1130,605,1195,560,1195,540,1130,490,1155,430,1195,380,1150,370,1100,320,1132,256,1092,330,1048,345,985,360,930], null, 16, 14, heat,
  (x, y) => .02 + rnd() * .1 + near(x, y, 420, 970, 90, 80) * .17);
[[563,80],[155,755],[740,828],[700,600],[697,612],[690,632],[290,1246],[303,1236],[510,886],[635,713],[790,345],[870,1078],[902,932],[729,1073],[697,1025],[667,1077],[567,280],[262,1090],[280,1080],[295,1062],[285,1105]].forEach(p => dot(g2, p[0], p[1], 14, '#f3ca5b'));
[[512,230],[569,331],[461,1206],[475,1030],[345,985],[560,781],[551,804]].forEach(p => dot(g2, p[0], p[1], 13, '#f9a94d'));
[[335,491],[304,593],[311,694],[293,782],[278,798],[257,818],[447,437],[485,532],[578,464],[404,635],[374,796],[322,560],[338,712],[262,845]].forEach((p, i) => dot(g2, p[0], p[1], 14, ['#f0774a', '#dc5148', '#ea6549'][i % 3]));
[[378,565],[402,632]].forEach(p => dot(g2, p[0], p[1], 14, '#c4343f'));
[[378,493],[390,530],[468,492],[460,620],[400,580],[335,615],[592,793]].forEach(p => dot(g2, p[0], p[1], 12, '#f6cb55'));
```
